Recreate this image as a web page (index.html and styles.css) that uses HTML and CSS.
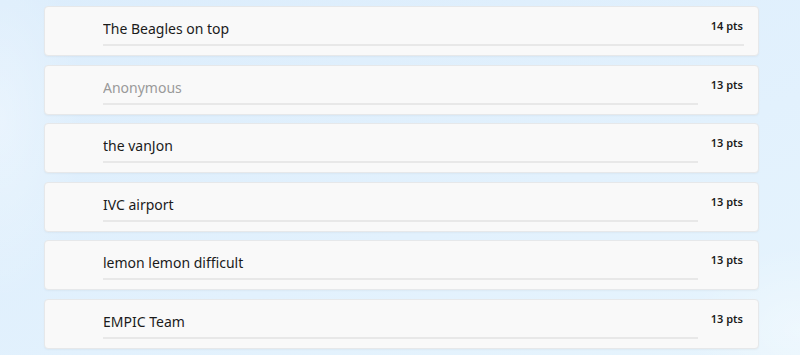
FILE: index.html
```html
<!DOCTYPE html>
<html lang="en">
<head>
  <meta charset="UTF-8">
  <title>Team Scores</title>
  <link rel="stylesheet" href="styles.css">
</head>
<body>
  <div class="board">
    <div class="team-row">
      <input class="team-name wide" type="text" value="The Beagles on top" placeholder="Anonymous" />
      <span class="points">14 pts</span>
    </div>
    <div class="team-row">
      <input class="team-name" type="text" value="" placeholder="Anonymous" />
      <span class="points">13 pts</span>
    </div>
    <div class="team-row">
      <input class="team-name" type="text" value="the vanJon" placeholder="Anonymous" />
      <span class="points">13 pts</span>
    </div>
    <div class="team-row">
      <input class="team-name" type="text" value="IVC airport" placeholder="Anonymous" />
      <span class="points">13 pts</span>
    </div>
    <div class="team-row">
      <input class="team-name" type="text" value="lemon lemon difficult" placeholder="Anonymous" />
      <span class="points">13 pts</span>
    </div>
    <div class="team-row">
      <input class="team-name" type="text" value="EMPIC Team" placeholder="Anonymous" />
      <span class="points">13 pts</span>
    </div>
  </div>
</body>
</html>
```

FILE: styles.css
```css
body {
  margin: 0;
  height: 355px;
  overflow: hidden;
  font-family: 'Noto Sans', 'Open Sans', sans-serif;
  color: #1b1b1b;
  background:
    radial-gradient(ellipse 120px 260px at 0 120px, rgba(255, 255, 255, 0.35), transparent 70%),
    radial-gradient(ellipse 160px 120px at 800px 330px, rgba(255, 255, 255, 0.35), transparent 70%),
    linear-gradient(160deg, #dcedfc 0%, #e2f1fd 60%, #e6f4fd 100%);
}

.board {
  width: 715px;
  margin: 0 0 0 44px;
  padding-top: 6px;
  display: flex;
  flex-direction: column;
  gap: 8.6px;
}

.team-row {
  position: relative;
  height: 48px;
  padding: 0 15px 0 58px;
  background-color: #f9f9f9;
  border: 1px solid #e6e8ea;
  border-radius: 4px;
  box-shadow: 0 1px 2px rgba(0, 0, 0, 0.04);
}

.team-name {
  display: block;
  width: 595px;
  height: 31px;
  margin-top: 6px;
  padding: 0;
  border: none;
  border-bottom: 2px solid #e8e8e8;
  background: transparent;
  font-family: inherit;
  font-size: 14px;
  color: #1b1b1b;
  outline: none;
}

.team-name.wide {
  width: 641px;
}

.team-name::placeholder {
  color: #9a9a9a;
}

/* score sits on top of the row, right aligned */
.points {
  position: absolute;
  top: 11px;
  right: 15px;
  font-size: 11px;
  font-weight: 600;
  color: #1b1b1b;
}
```
